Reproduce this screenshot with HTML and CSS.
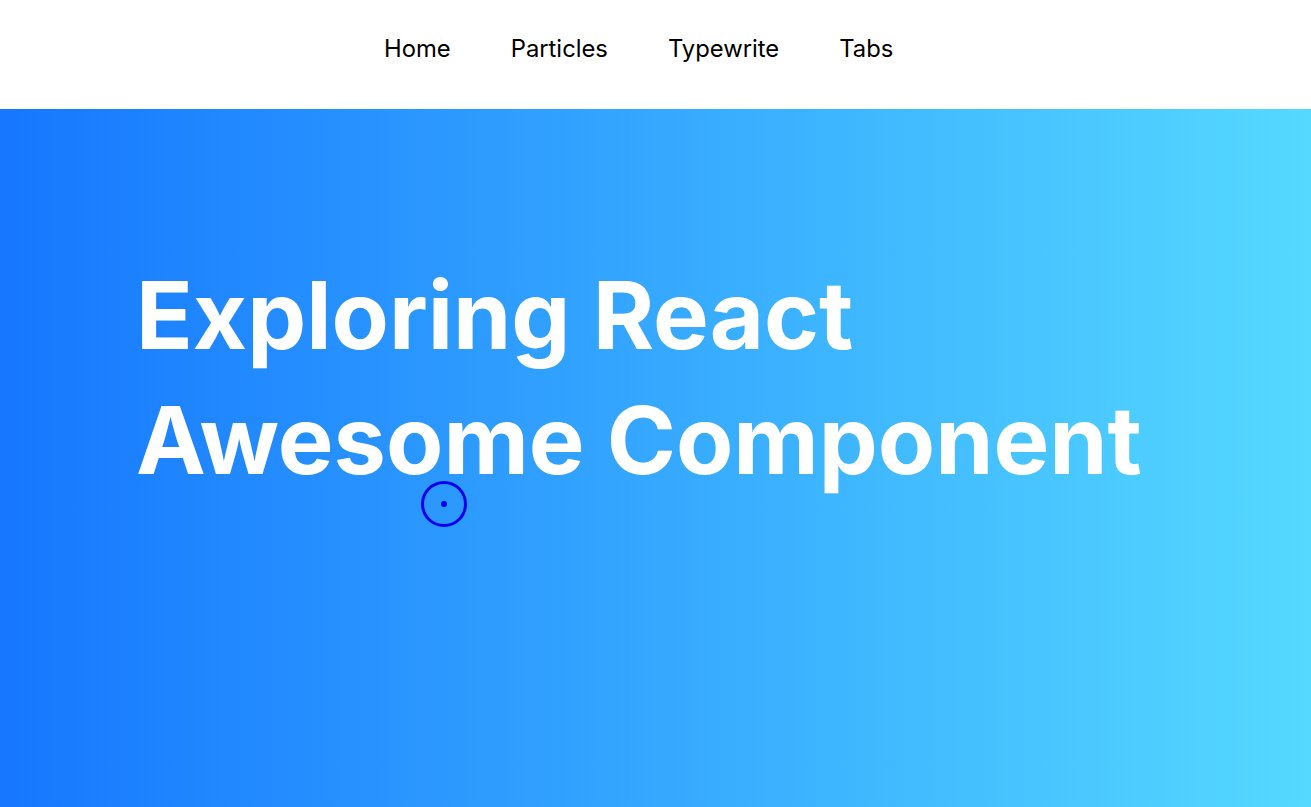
FILE: index.html
```html
<!DOCTYPE html>
<html>
<head>
<meta charset="utf-8">
<link rel="stylesheet" href="styles.css">
</head>
<body>
<header class="header">
  <nav class="nav">
    <a class="nav-link" href="#">Home</a>
    <a class="nav-link" href="#">Particles</a>
    <a class="nav-link" href="#">Typewrite</a>
    <a class="nav-link" href="#">Tabs</a>
  </nav>
</header>
<main class="hero">
  <h1 class="title">Exploring React<br>Awesome Component</h1>
  <div class="cursor"><span class="cursor-dot"></span></div>
</main>
</body>
</html>
```
FILE: styles.css
```css
* { box-sizing: border-box; }
html, body { margin: 0; padding: 0; }
body {
  font-family: Inter, "Noto Sans", sans-serif;
  background: #fff;
  overflow: hidden;
}
.header {
  height: 109px;
  display: flex;
  align-items: center;
  padding-left: 384px;
  padding-bottom: 13px;
}
.nav {
  display: flex;
  gap: 60px;
}
.nav-link {
  color: #000;
  text-decoration: none;
  font-size: 23.8px;
  font-weight: 400;
}
.hero {
  position: relative;
  height: 698px;
  background: linear-gradient(90deg, #1677ff 0%, #55d9ff 100%);
  padding: 144px 0 0 136px;
}
.title {
  margin: 0;
  color: #fff;
  font-size: 93.6px;
  font-weight: 700;
  line-height: 125px;
  letter-spacing: 0;
}
.cursor {
  position: absolute;
  left: 421px;
  top: 372px;
  width: 46px;
  height: 46px;
  border: 3px solid #0000f0;
  border-radius: 50%;
  display: flex;
  align-items: center;
  justify-content: center;
}
.cursor-dot {
  width: 6px;
  height: 6px;
  border-radius: 50%;
  background: #0000f0;
}
```
